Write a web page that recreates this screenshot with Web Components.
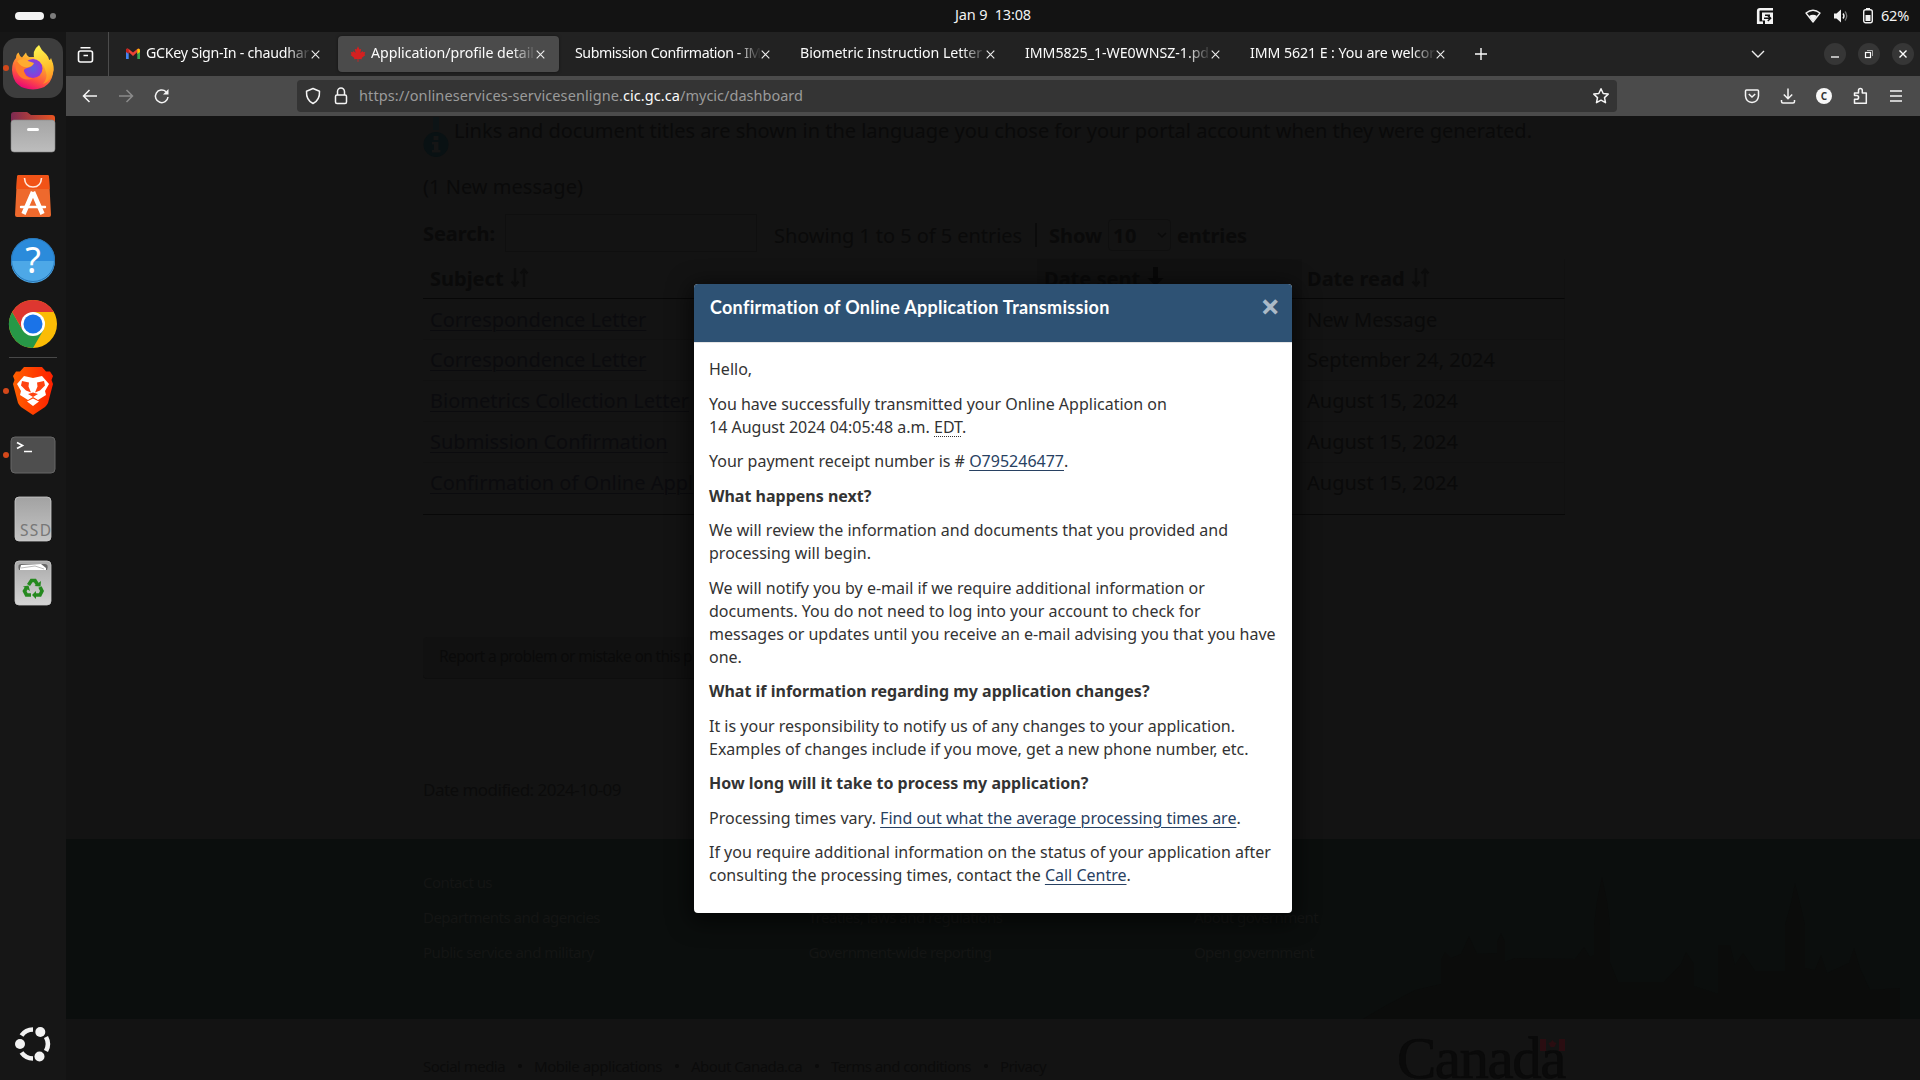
<!DOCTYPE html>
<html lang="en">
<head>
<meta charset="utf-8">
<title>Application/profile details</title>
<style>
html,body{margin:0;height:100%;background:#131313;overflow:hidden}
body{font-family:"Noto Sans",sans-serif}
</style>
</head>
<body>
<desk-top></desk-top>
<script>
const define=(name,html,after)=>customElements.define(name,class extends HTMLElement{
  connectedCallback(){
    if(this.shadowRoot)return;
    const t=document.createElement('template');
    t.innerHTML=typeof html==='function'?html(this):html;
    this.attachShadow({mode:'open'}).append(t.content.cloneNode(true));
    if(after)after(this,this.shadowRoot);
  }
});

/* A single line of text tracked so that it spans a given width. */
define('fit-text','<style>:host{display:inline-block;white-space:pre;flex:none}</style><span><slot></slot></span>',(el,root)=>{
  const span=root.querySelector('span'),w=parseFloat(el.getAttribute('w')),n=el.textContent.length;
  const now=span.getBoundingClientRect().width;
  if(w&&now){span.style.letterSpacing=((w-now)/n)+'px';el.style.width=w+'px';}
});

define('top-bar',`<style>
:host{display:flex;align-items:center;height:32px;background:#131313;color:#f2f2f2;font:14.5px "Noto Sans",sans-serif}
.l,.r{flex:1;display:flex;align-items:center}
.pill{width:29px;height:8px;border-radius:4px;background:#f4f4f4;margin-left:15px}
.dot{width:6px;height:6px;border-radius:3px;background:#7d7d7d;margin-left:6px}
.r{justify-content:flex-end;padding-right:11px}
.c{padding-left:77px;line-height:30px;margin-top:-4px}
.p{margin-top:-2px}
svg{display:block}
</style>
<div class="l"><i class="pill"></i><i class="dot"></i></div>
<div class="c"><fit-text w="76">Jan 9  13:08</fit-text></div>
<div class="r">
<svg width="18" height="18" viewBox="0 0 18 18" style="margin-right:31px"><path d="M2.200 17V4Q2.200 2.200 4 2.200H17" fill="none" stroke="#f4f4f4" stroke-width="2.600"/><path d="M2 15.700h5" stroke="#f4f4f4" stroke-width="2.600"/><path d="M6 5.500H17V17H9V13.500H6z" fill="#f4f4f4"/><path d="M9 8.200h5M8 11.200h6M11.800 8.400l2.800 2.800-2.800 2.800" fill="none" stroke="#131313" stroke-width="1.500"/></svg>
<svg width="16" height="16" viewBox="0 0 16 16" style="margin-right:12px"><path d="M1 5Q8-.5 15 5L8 14z" fill="none" stroke="#f2f2f2" stroke-width="1.300" stroke-linejoin="round"/><path d="M4 8Q8 5.500 12 8L8 13.500z" fill="#f2f2f2"/></svg>
<svg width="16" height="16" viewBox="0 0 16 16" style="margin-right:13px"><path d="M1 5.500h2.500L8 1.500v13L3.500 10.500H1z" fill="#f2f2f2"/><path d="M10 5.500q2 2.500 0 5" stroke="#f2f2f2" stroke-width="1.400" fill="none"/><path d="M12 3.500q3.500 4.500 0 9" stroke="#777" stroke-width="1.300" fill="none"/></svg>
<svg width="12" height="16" viewBox="0 0 12 16" style="margin-right:7px"><rect x="4" y="0" width="4" height="2" fill="#f2f2f2"/><rect x="1.700" y="1.800" width="8.600" height="13" rx="2" fill="none" stroke="#f2f2f2" stroke-width="1.400"/><rect x="3.500" y="7" width="5" height="6" fill="#f2f2f2"/></svg>
<fit-text class="p" w="28">62%</fit-text>
</div>`);

define('dock-item',el=>`<style>
:host{display:flex;width:66px;height:60px;align-items:center;justify-content:center;position:relative;margin-bottom:4px}
.tile{width:60px;height:60px;border-radius:14px;display:flex;align-items:center;justify-content:center;${el.hasAttribute('active')?'background:#3d3d3d':''}}
.run{position:absolute;left:3px;top:27px;width:6px;height:6px;border-radius:3px;background:#d4481a}
</style><div class="tile"><slot></slot></div>${el.hasAttribute('running')?'<i class="run"></i>':''}`);

define('app-dock',`<style>
:host{display:flex;flex-direction:column;width:66px;height:1048px;background:#161616;padding-top:6px;box-sizing:border-box}
svg{display:block;overflow:visible}
hr{width:48px;height:1px;border:0;background:#484848;margin:-1px 9px 3px}
.fill{flex:1}
</style>
<dock-item active running><svg width="44" height="46" viewBox="0 0 44 46">
<defs><linearGradient id="fo" x1=".8" y1="0" x2=".3" y2="1"><stop offset="0" stop-color="#fff44f"/><stop offset=".35" stop-color="#ffa22c"/><stop offset=".7" stop-color="#ff4f42"/><stop offset="1" stop-color="#e6007a"/></linearGradient><linearGradient id="fy" x1=".4" y1="0" x2=".6" y2="1"><stop offset="0" stop-color="#fff44f"/><stop offset=".6" stop-color="#ffc02c"/><stop offset="1" stop-color="#ff8a24"/></linearGradient><radialGradient id="fp"><stop offset="0" stop-color="#5a5fe0"/><stop offset="1" stop-color="#9336d8"/></radialGradient></defs>
<path d="M5 13Q5 9 7.500 7.500 8.500 11 11 12.500L15 7.500Q15.500 11 18 12H31L39 15Q43 19 42.500 25 41 44 22 44.500 2 44 1 25 1 17 5 13z" fill="url(#fo)"/>
<path d="M28 0Q30 5 35 9 38 12 38.500 16L40 13Q43 19 42.500 25 41 36 32 39 37 33 35 27 33 18 24 15 20 6 28 0z" fill="url(#fy)"/>
<circle cx="22" cy="23.500" r="9.500" fill="url(#fp)"/><path d="M5 17q6-5 11 0l6 1.500q0 3-6 4.500-4 1-3 4 2 6 9 6.500-9 3-14-3-5-6-3-13.500z" fill="#ff7a2a"/><path d="M6 16q6-4 11 0l6 2q-1 3-7 4.500-6 0-10-6.500z" fill="#ffac30"/></svg></dock-item>
<dock-item><svg width="46" height="42" viewBox="0 0 46 42"><defs><linearGradient id="ff"><stop offset="0" stop-color="#7c2a52"/><stop offset="1" stop-color="#ea5420"/></linearGradient><linearGradient id="fg" x2="0" y2="1"><stop offset="0" stop-color="#a4a4a4"/><stop offset="1" stop-color="#bdbdbd"/></linearGradient></defs><path d="M1 15V4q0-3 3-3h13l4 3h21q3 0 3 3v10z" fill="url(#ff)"/><rect x="1" y="9" width="44" height="32" rx="3" fill="url(#fg)" stroke="#888" stroke-width=".6"/><rect x="17" y="17" width="12" height="3" rx="1.500" fill="#fff"/></svg></dock-item>
<dock-item><svg width="38" height="44" viewBox="0 0 38 44"><path d="M3 3q0-2 2-2h28q2 0 2 2l2 38q0 2-2 2H3q-2 0-2-2z" fill="#ee692d"/><path d="M3 3q0-2 2-2h28q2 0 2 2l.6 12H2.400z" fill="#f15317"/><path d="M10.500 4Q11 13 19 13t8.500-9" fill="none" stroke="#ffe8dc" stroke-width="1.600"/><path d="M19 18L9.500 40M19 18L28.500 40" stroke="#fff" stroke-width="4.500"/><path d="M7 33h24" stroke="#fff" stroke-width="2.400" stroke-linecap="round"/></svg></dock-item>
<dock-item><svg width="46" height="46" viewBox="0 0 46 46"><circle cx="23" cy="23" r="22" fill="#2b8bdb"/><path d="M1 24a22 22 0 0 0 44 0z" fill="#4da8e7"/><circle cx="23" cy="23" r="21.500" fill="none" stroke="#2a78b8"/><text x="23" y="35.500" text-anchor="middle" font-family="Noto Sans" font-size="36" fill="#fff">?</text></svg></dock-item>
<dock-item style="margin-bottom:4px"><svg width="48" height="48" viewBox="-24 -24 48 48"><circle r="24" fill="#fbbc05"/><path d="M-20.800-12A24 24 0 0 0 0 24L10.400 6 0 0-10.400 6z" fill="#279847"/><path d="M-20.800-12A24 24 0 0 1 20.800-12H0L-10.400 6z" fill="#de3730"/><circle r="12" fill="#fff"/><circle r="9.500" fill="#1a73e8"/></svg></dock-item>
<hr>
<dock-item running><svg width="42" height="48" viewBox="0 0 42 48"><defs><linearGradient id="br"><stop offset="0" stop-color="#ff6000"/><stop offset="1" stop-color="#ff2000"/></linearGradient></defs><path d="M12 0H30L34 4.500 38 4.500 41 9 39.500 13 41 17 36 36Q35 38 33 40L21 48 9 40Q7 38 6 36L1 17 2.500 13 1 9 4 4.500 8 4.500z" fill="url(#br)"/><path d="M12 9L21 11 30 9 37 17 33 24 34 28 26 33 21 30 16 33 8 28 9 24 5 17z" fill="#fff"/><path d="M10 14l7 1.500-.5 4 2.500 6-5-2-5-5M32 14l-7 1.500.5 4-2.500 6 5-2 5-5M16 27l5 3 5-3-5-1.500z" fill="#ff4210"/><path d="M15 34.500l6-3 6 3-6 4.500z" fill="#fff"/></svg></dock-item>
<dock-item running><svg width="46" height="38" viewBox="0 0 46 38"><rect x="1" y="1" width="44" height="36" rx="4" fill="#4e4e4e" stroke="#666"/><path d="M7 6.500l5.500 3-5.500 3" fill="none" stroke="#fff" stroke-width="1.700"/><path d="M14 15.500h8" stroke="#fff" stroke-width="1.500"/></svg></dock-item>
<dock-item><svg width="38" height="46" viewBox="0 0 38 46"><rect x="1" y="1" width="36" height="44" rx="4" fill="url(#sg)" stroke="#ccc" stroke-width=".8"/><defs><linearGradient id="sg" x2="0" y2="1"><stop offset="0" stop-color="#a2a2a2"/><stop offset="1" stop-color="#c4c4c4"/></linearGradient></defs><text x="6" y="40" font-family="Noto Sans" font-size="15.500" textLength="31" fill="#777">SSD</text></svg></dock-item>
<dock-item><svg width="38" height="46" viewBox="0 0 38 46"><defs><linearGradient id="tg" x2="0" y2="1"><stop offset="0" stop-color="#aaa"/><stop offset="1" stop-color="#d4d4d4"/></linearGradient></defs><rect x="1" y="1" width="36" height="44" rx="4" fill="url(#tg)" stroke="#ccc" stroke-width=".8"/><path d="M5 10q-2-6 2-6h24q4 0 2 6" fill="#666"/><path d="M6 9l1-4 20-1 5 4v2H6z" fill="#fff"/><path d="M7 8l14-2 9 3" fill="none" stroke="#bbb"/><g fill="none" stroke="#25891f" stroke-width="3.600"><path d="M14.500 25l3-4.500h3.500l2.500 4"/><path d="M26 27l2 4-2 4h-5"/><path d="M17 35h-4.500l-2-4 2.500-4"/></g><path d="M20.500 26l6 .5L27 21zM22 31l-4 4 4 4zM9 26.500l5.500-1 1.500 5.500z" fill="#25891f"/></svg></dock-item>
<div class="fill"></div>
<dock-item style="margin:0 0 6px"><svg width="38" height="38" viewBox="-19 -19 38 38"><g fill="none" stroke="#f2f2f2" stroke-width="4.600"><path d="M-11.500-8.500A14.300 14.300 0 0 1 0-14.500"/><path d="M-11.500 8.500A14.300 14.300 0 0 0 0 14.500"/><path d="M13-7A14.500 14.500 0 0 1 13 7"/></g><g fill="#f2f2f2"><circle cx="-13" cy="0" r="5"/><circle cx="7.300" cy="-12" r="5"/><circle cx="6.500" cy="12.500" r="5"/></g></svg></dock-item>`);

define('browser-tab',el=>`<style>
:host{display:flex;align-items:center;box-sizing:border-box;width:221px;height:36px;margin:4px 4px 0 0;padding-left:12px;border-radius:4px;color:#fbfbfb;font:14.2px "Noto Sans",sans-serif;${el.hasAttribute('active')?'background:#4b4b4b;box-shadow:0 0 3px rgba(0,0,0,.5)':''}}
.t{flex:1;white-space:nowrap;line-height:34px;margin-top:-2px;-webkit-mask-image:linear-gradient(90deg,#000 calc(100% - 24px),transparent)}
svg{display:block;margin-right:14px}
::slotted(svg){margin-right:5px;flex:none}
</style><slot name="icon"></slot><div class="t"><fit-text w="${el.getAttribute('w')}">${el.getAttribute('label')}</fit-text></div>
<svg width="9" height="9" viewBox="0 0 9 9"><path d="M.7.7l7.600 7.600M8.300.7L.7 8.300" stroke="#eee" stroke-width="1.100"/></svg>`);

define('tab-strip',`<style>
:host{display:flex;height:44px;background:#222}
.view{width:42px;border-right:1px solid #4c4c4c;display:flex;align-items:center;justify-content:center;padding-left:0;margin-right:4px}
.view svg{margin-right:2px;margin-top:1px}
.tail{flex:1;display:flex;align-items:center;justify-content:flex-end}
.plus{margin-left:11px;margin-right:auto}
b{width:22px;height:22px;border-radius:11px;background:#363636;display:flex;align-items:center;justify-content:center;margin-right:12px}
b:last-child{margin-right:6px}
</style>
<div class="view"><svg width="18" height="18" viewBox="0 0 18 18" fill="none" stroke="#fbfbfb" stroke-width="1.600"><rect x="1.500" y="5" width="14" height="11" rx="2"/><path d="M3.500 1.800h10M6.500 9.500h4.500"/></svg></div>
<browser-tab w="163" label="GCKey Sign-In - chaudhar"><svg slot="icon" width="16" height="16" viewBox="0 0 16 16"><path d="M1 3.500V13h2.700V6.500z" fill="#4285f4"/><path d="M15 3.500V13h-2.700V6.500z" fill="#34a853"/><path d="M1 3.500q1-1.500 2.700-.5L8 6.500 12.300 3q1.700-1 2.700.5L8 10z" fill="#ea4335"/><path d="M12.300 3q2.700-.8 2.700 1.500v1.500l-2.700 2z" fill="#fbbc04"/><path d="M1 4q0-2 2.700-.9V8L1 6z" fill="#c5221f"/></svg></browser-tab>
<browser-tab active w="163" label="Application/profile detail"><svg slot="icon" width="16" height="16" viewBox="0 0 16 16"><path d="M8 .3L9.500 3.500 11.200 2.700 10.400 7 12.500 5 13 6.200 15.300 5.900 14.500 8.200 15.500 9 11.700 12 12 13.300 8.400 12.900 8.500 15.700H7.500L7.600 12.900 4 13.300 4.300 12 .5 9 1.500 8.200.7 5.900 3 6.200 3.500 5 5.600 7 4.800 2.700 6.500 3.500z" fill="#d42020"/></svg></browser-tab>
<browser-tab w="186" label="Submission Confirmation - IM"></browser-tab>
<browser-tab w="182" label="Biometric Instruction Letter"></browser-tab>
<browser-tab w="184" label="IMM5825_1-WE0WNSZ-1.pd"></browser-tab>
<browser-tab w="185" label="IMM 5621 E : You are welcor"></browser-tab>
<div class="tail">
<svg class="plus" width="14" height="14" viewBox="0 0 14 14"><path d="M7 1v12M1 7h12" stroke="#fbfbfb" stroke-width="1.400"/></svg>
<svg width="14" height="10" viewBox="0 0 14 10" style="margin-right:59px"><path d="M1 2l6 6 6-6" fill="none" stroke="#eee" stroke-width="1.400"/></svg>
<b><svg width="10" height="10" viewBox="0 0 10 10"><path d="M1 8h8" stroke="#fff" stroke-width="1.300"/></svg></b>
<b><svg width="10" height="10" viewBox="0 0 10 10" fill="none"><rect x="1.500" y="3.500" width="5" height="5" stroke="#fff" stroke-width="1.200"/><path d="M3 1.500h5.500V7" stroke="#aaa"/></svg></b>
<b><svg width="10" height="10" viewBox="0 0 10 10"><path d="M1.500 1.500l7 7M8.500 1.500l-7 7" stroke="#fff" stroke-width="1.400"/></svg></b>
</div>`);

define('nav-bar',`<style>
:host{display:flex;align-items:center;height:40px;background:#4b4b4b;color:#9b9b9b;font:14.500px "Noto Sans",sans-serif}
svg{display:block;flex:none;fill:none;stroke:#f5f5f5;stroke-width:1.500}
.nav{display:flex;width:214px;gap:18px;padding-left:15px;margin-right:2px}
.url{display:flex;align-items:center;width:1320px;height:32px;background:#343434;border-radius:4px;box-sizing:border-box;padding:0 7px}
.u{line-height:30px;margin-top:-2px;flex:1;display:flex}.u .d{color:#fbfbfb}
.r{display:flex;gap:18px;margin-left:126px}
</style>
<div class="nav">
<svg width="18" height="18" viewBox="0 0 18 18"><path d="M16 9H2.500M8.500 3L2.500 9l6 6"/></svg>
<svg width="18" height="18" viewBox="0 0 18 18" style="stroke:#8b8b8b"><path d="M2 9h13.500M9.500 3l6 6-6 6"/></svg>
<svg width="18" height="18" viewBox="0 0 18 18"><path d="M15 10a6.300 6.300 0 1 1-2-5.300"/><path d="M15.500 2v5.500H10z" fill="#f5f5f5" stroke="none"/></svg></div>
<div class="url">
<svg width="18" height="18" viewBox="0 0 18 18" style="margin-right:10px"><path d="M9 1.500L15.500 4.200Q16 13 9 16.500 2 13 2.500 4.200z" stroke-linejoin="round"/></svg>
<svg width="18" height="18" viewBox="0 0 18 18" style="margin-right:9px"><rect x="3.500" y="8" width="11" height="8.500" rx="1.500"/><path d="M5.500 8V4.500a3.500 3.500 0 0 1 7 0V8"/></svg>
<div class="u"><fit-text w="264">https://onlineservices-servicesenligne.</fit-text><fit-text class="d" w="57">cic.gc.ca</fit-text><fit-text w="123">/mycic/dashboard</fit-text></div>
<svg width="18" height="18" viewBox="0 0 18 18"><path d="M9 1.800l2.200 4.700 5 .6-3.700 3.500 1 5.100L9 13.200l-4.500 2.500 1-5.100L1.800 7.100l5-.6z" stroke-linejoin="round"/></svg>
</div>
<div class="r">
<svg width="18" height="18" viewBox="0 0 18 18"><path d="M3.500 3h11q1 0 1 1v5q-.5 6-6.500 6.500Q3 15 2.500 9V4q0-1 1-1z"/><path d="M5.800 7L9 10l3.200-3"/></svg>
<svg width="18" height="18" viewBox="0 0 18 18"><path d="M9 1.500v10M4.800 7.500L9 11.700l4.200-4.200M2.500 13v1.500q0 1.500 1.500 1.500h10q1.500 0 1.500-1.500V13"/></svg>
<svg width="18" height="18" viewBox="0 0 18 18" style="stroke:none"><circle cx="9" cy="9" r="8" fill="#f8f8f8"/><text x="9" y="12.500" text-anchor="middle" font-family="Noto Sans" font-size="10" font-weight="700" fill="#333">C</text></svg>
<svg width="18" height="18" viewBox="0 0 18 18"><path d="M3.500 16.300v-4h2.200a1.900 1.900 0 0 0 0-3.800H3.500V6h4V3.500a1.900 1.900 0 0 1 3.800 0V6h4v10.300z" stroke-linejoin="round"/></svg>
<svg width="18" height="18" viewBox="0 0 18 18"><path d="M3 4h12M3 9h12M3 14h12"/></svg>
</div>`);

define('sort-icon',el=>`<style>:host{display:inline-block;width:19px;height:22px;margin-left:6px;vertical-align:-3px}svg{display:block}</style>
${el.hasAttribute('down')?'<svg width="19" height="22"><path d="M7 0h5v11h5.500L9.500 19 1.500 11H7z" fill="#080808"/></svg>':'<svg width="19" height="22" fill="none" stroke="#0c0c0c" stroke-width="2.400"><path d="M5 1v17M1.500 14.500L5 18.500l3.500-4M14 20V3M10.500 6.500L14 2.500l3.500 4"/></svg>'}`);

define('message-list',`<style>
:host{display:block;width:1142px;margin-left:357px;color:#0a0a0a;font-size:20px;white-space:nowrap}
.note{display:flex;height:28px;line-height:30px}
.note svg{flex:none;margin-right:5px;overflow:visible}
.new{height:28px;line-height:30px;margin-top:28px}
.ctl{display:flex;align-items:center;height:38px;margin:14px 0 7px}
.in{width:250px;height:36px;border:1px solid #0f0f0f;margin:0 17px 0 10px}
.ctl>.s{padding-top:4px}
.sel{display:flex;align-items:center;width:63px;height:32px;box-sizing:border-box;border:1px solid #0f0f0f;border-radius:4px;margin:4px 6px 0 6px;padding-left:4px}
.sep{width:2px;height:24px;background:#0b0b0b;margin:4px 12px 0 13px}
table{border-collapse:separate;border-spacing:0;width:1142px;table-layout:fixed;border-bottom:1px solid #080808}
th,td{text-align:left;padding:0 0 0 7px;box-sizing:border-box;vertical-align:top;line-height:40px;height:41px;border-bottom:1px solid #111}
tr:nth-child(2) td{padding-top:2px;line-height:38px}
th{height:40px;line-height:39px}
tr:first-child th{border-bottom-color:#070707}
tr:last-child td{border-bottom:0}
th:nth-child(2){background:#111}
td:nth-child(2){background:#121212}
td:nth-child(3),th:nth-child(3){padding-left:5px;border-right:1px solid #111}
.a{color:#0b0b0e;text-decoration:underline;text-underline-offset:3px;text-decoration-thickness:1px}
</style>
<div class="note"><svg width="26" height="40" viewBox="0 0 26 40"><path d="M10 1h6v13h-6z" fill="#0d1416"/><circle cx="13" cy="28.500" r="12.500" fill="#091113"/><path d="M10.500 20h5v4h-5zM9 26h6.500v8h2v2.500H9V34h2v-5.500H9z" fill="#151515"/></svg><fit-text w="1078">Links and document titles are shown in the language you chose for your portal account when they were generated.</fit-text></div>
<div class="new"><fit-text w="160">(1 New message)</fit-text></div>
<div class="ctl"><b><fit-text w="72">Search:</fit-text></b><i class="in"></i><fit-text class="s" w="248">Showing 1 to 5 of 5 entries</fit-text><i class="sep"></i><b class="s"><fit-text w="53">Show</fit-text></b><span class="sel"><b><fit-text w="24">10</fit-text></b><svg width="10" height="7" style="margin-left:20px"><path d="M1 1l4 4 4-4" fill="none" stroke="#0a0a0a" stroke-width="1.500"/></svg></span><b class="s"><fit-text w="70">entries</fit-text></b></div>
<table><colgroup><col style="width:614px"><col style="width:265px"><col></colgroup>
<tr><th>Subject<sort-icon></sort-icon></th><th>Date sent<sort-icon down></sort-icon></th><th>Date read<sort-icon></sort-icon></th></tr>
<tr><td><span class="a">Correspondence Letter</span></td><td></td><td>New Message</td></tr>
<tr><td><span class="a">Correspondence Letter</span></td><td></td><td>September 24, 2024</td></tr>
<tr><td><span class="a">Biometrics Collection Letter</span></td><td></td><td>August 15, 2024</td></tr>
<tr><td><span class="a">Submission Confirmation</span></td><td></td><td>August 15, 2024</td></tr>
<tr><td style="height:51px"><span class="a">Confirmation of Online Appl</span></td><td></td><td>August 15, 2024</td></tr></table>`);

define('page-footer',`<style>
:host{display:flex;flex-direction:column;flex:1;font-size:15px;white-space:nowrap}
.date{font-size:17px;line-height:28px;height:63px;margin-left:357px;color:#0b0b0b}
.band{height:180px;background:#0b0e0d;display:flex;color:#141514;justify-content:space-between}
.band svg{flex:none}
.cols{display:grid;grid-template-columns:385.500px 385.500px 125px;grid-auto-rows:35px;line-height:35px;padding:26px 0 0 357px}
.low{flex:1;display:flex;align-items:flex-start;padding:0 0 0 357px;color:#0b0b0b}
.links{display:flex;line-height:24px;padding-top:35px;width:974px}
.links i{width:4px;height:4px;border-radius:2px;background:#0b0b0b;margin:10px 12.500px 0}
.mark{position:relative;width:170px;height:61px;font:59px/54px "Liberation Serif",serif;padding-top:12px;box-sizing:border-box;color:#0a0a0a;-webkit-text-stroke:.6px #0a0a0a}
.mark svg{position:absolute;left:143px;top:20px}
</style>
<div class="date"><fit-text w="198">Date modified: 2024-10-09</fit-text></div>
<div class="band"><div class="cols">
<fit-text w="69">Contact us</fit-text><span></span><span></span>
<fit-text w="177">Departments and agencies</fit-text><fit-text w="194">Treaties, laws and regulations</fit-text><fit-text w="124">About government</fit-text>
<fit-text w="171">Public service and military</fit-text><fit-text w="183">Government-wide reporting</fit-text><fit-text w="120">Open government</fit-text></div>
<svg width="560" height="180" viewBox="1360 839 560 180" fill="#0b0c0b"><path d="M1363 1019L1385 1006 1415 990 1441 984V960l4-8 6 6 10-4 8-18 8 18 20-1V942l4-9 4 9v20l10-4 60 1 9-12 6 10 4-2V925l3-24 5-24 5 24 3 24v37l8 20h46l17-18 5-12 8 12v22l24 8V945h12l5 20 8-12 12 18h30V925l6-22 4-20 5 20 5 22v43l10 2 6-15 6 18 22-10 5-15 6 20 10 22 30-2v46z"/></svg></div>
<div class="low"><div class="links"><fit-text w="82">Social media</fit-text><i></i><fit-text w="128">Mobile applications</fit-text><i></i><fit-text w="111">About Canada.ca</fit-text><i></i><fit-text w="140">Terms and conditions</fit-text><i></i><fit-text w="46">Privacy</fit-text></div>
<div class="mark"><fit-text w="168">Canada</fit-text><svg width="25" height="12"><path d="M0 0h6v12H0zM19 0h6v12h-6zM12.500 1l1.500 2 2.500 1-2 4h-4l-2-4 2.500-1z" fill="#2a0d11"/></svg></div></div>`);

define('confirm-dialog',`<style>
:host{display:flex;flex-direction:column;position:absolute;left:628px;top:168px;width:598px;height:629px;background:#fff;border-radius:4px;box-shadow:0 5px 22px 4px rgba(0,0,0,.6);color:#333;font:16px/23px "Noto Sans",sans-serif}
header{height:58px;box-sizing:border-box;background:#2e5274;border-radius:4px 4px 0 0;display:flex;justify-content:space-between;padding:10px 12px 0 16px;color:#fff;font:700 18px/26px Lato,sans-serif}
.x{font:700 34px/24px "Noto Sans",sans-serif;color:#abbac7}
main{border-top:1px solid #e5e5e5;padding:15px 15px 0;white-space:nowrap}
p{margin:0 0 11.500px}
.a{color:#284162;text-decoration:underline;text-underline-offset:3px;text-decoration-thickness:1px}
.ab{text-decoration:underline dotted 1px;text-underline-offset:3px}
</style>
<header><fit-text w="400">Confirmation of Online Application Transmission</fit-text><span class="x">×</span></header>
<main>
<p>Hello,</p>
<p>You have successfully transmitted your Online Application on<br>14 August 2024 04:05:48 a.m. <span class="ab">EDT</span>.</p>
<p>Your payment receipt number is # <span class="a">O795246477</span>.</p>
<p><b>What happens next?</b></p>
<p>We will review the information and documents that you provided and<br>processing will begin.</p>
<p>We will notify you by e-mail if we require additional information or<br>documents. You do not need to log into your account to check for<br>messages or updates until you receive an e-mail advising you that you have<br>one.</p>
<p><b>What if information regarding my application changes?</b></p>
<p>It is your responsibility to notify us of any changes to your application.<br>Examples of changes include if you move, get a new phone number, etc.</p>
<p><b>How long will it take to process my application?</b></p>
<p>Processing times vary. <span class="a">Find out what the average processing times are</span>.</p>
<p>If you require additional information on the status of your application after<br>consulting the processing times, contact the <span class="a">Call Centre</span>.</p>
</main>`);

define('web-page',`<style>
:host{display:flex;flex-direction:column;position:relative;height:964px;background:#131313;overflow:hidden}
.report{width:280px;height:42px;margin:121px 0 97px 357px;background:#111;border-bottom:1px solid #0e0e0e;border-radius:4px;color:#0a0a0a;font-size:15.500px;line-height:38px;padding-left:16px;box-sizing:border-box;white-space:nowrap}
message-list{height:400px}
</style>
<message-list></message-list>
<div class="report"><fit-text w="253">Report a problem or mistake on this p</fit-text></div>
<page-footer></page-footer>
<confirm-dialog></confirm-dialog>`);

define('desk-top',`<style>
:host{display:grid;width:1920px;height:1080px;grid-template:32px 1048px / 66px 1854px;font-family:"Noto Sans",sans-serif;overflow:hidden}
top-bar{grid-column:1/3}
.win{display:flex;flex-direction:column;min-width:0}
</style>
<top-bar></top-bar><app-dock></app-dock>
<div class="win"><tab-strip></tab-strip><nav-bar></nav-bar><web-page></web-page></div>`);
</script>
</body>
</html>
